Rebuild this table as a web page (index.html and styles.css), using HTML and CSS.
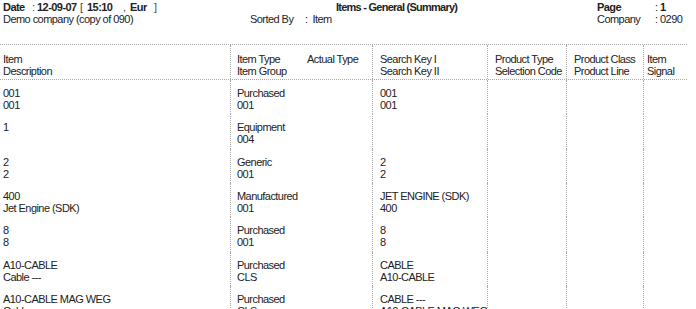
FILE: index.html
```html
<!DOCTYPE html>
<html>
<head>
<meta charset="utf-8">
<link rel="stylesheet" href="styles.css">
</head>
<body>
<div class="report">
  <header class="top">
    <div class="date">
      <b>Date</b><span>:</span><b>12-09-07</b><span>[</span><b>15:10</b><span>,</span><b>Eur</b><span>]</span>
    </div>
    <div class="title"><b>Items - General (Summary)</b></div>
    <div class="lbl"><b>Page</b></div>
    <div class="val">: <b>1</b></div>

    <div class="company">Demo company (copy of 090)</div>
    <div class="sorted">Sorted By</div>
    <div class="sortval"><span>:</span><span class="sv">Item</span></div>
    <div class="lbl">Company</div>
    <div class="val">: 0290</div>
  </header>

  <div class="table">
    <div class="row head">
      <div class="c c1">Item<br>Description</div>
      <div class="c c2"><div class="split"><span>Item Type<br>Item Group</span><span>Actual Type</span></div></div>
      <div class="c c3">Search Key I<br>Search Key II</div>
      <div class="c c4">Product Type<br>Selection Code</div>
      <div class="c c5">Product Class<br>Product Line</div>
      <div class="c c6">Item<br>Signal</div>
    </div>

    <div class="row">
      <div class="c c1">001<br>001</div>
      <div class="c c2">Purchased<br>001</div>
      <div class="c c3">001<br>001</div>
      <div class="c c4"></div><div class="c c5"></div><div class="c c6"></div>
    </div>
    <div class="row">
      <div class="c c1">1<br>&nbsp;</div>
      <div class="c c2">Equipment<br>004</div>
      <div class="c c3"></div>
      <div class="c c4"></div><div class="c c5"></div><div class="c c6"></div>
    </div>
    <div class="row">
      <div class="c c1">2<br>2</div>
      <div class="c c2">Generic<br>001</div>
      <div class="c c3">2<br>2</div>
      <div class="c c4"></div><div class="c c5"></div><div class="c c6"></div>
    </div>
    <div class="row">
      <div class="c c1">400<br>Jet Engine (SDK)</div>
      <div class="c c2">Manufactured<br>001</div>
      <div class="c c3">JET ENGINE (SDK)<br>400</div>
      <div class="c c4"></div><div class="c c5"></div><div class="c c6"></div>
    </div>
    <div class="row">
      <div class="c c1">8<br>8</div>
      <div class="c c2">Purchased<br>001</div>
      <div class="c c3">8<br>8</div>
      <div class="c c4"></div><div class="c c5"></div><div class="c c6"></div>
    </div>
    <div class="row">
      <div class="c c1">A10-CABLE<br>Cable ---</div>
      <div class="c c2">Purchased<br>CLS</div>
      <div class="c c3">CABLE<br>A10-CABLE</div>
      <div class="c c4"></div><div class="c c5"></div><div class="c c6"></div>
    </div>
    <div class="row">
      <div class="c c1">A10-CABLE MAG WEG<br>Cable ---</div>
      <div class="c c2">Purchased<br>CLS</div>
      <div class="c c3">CABLE ---<br>A10-CABLE MAG WEG</div>
      <div class="c c4"></div><div class="c c5"></div><div class="c c6"></div>
    </div>
  </div>
</div>
</body>
</html>
```

FILE: styles.css
```css
html, body {
  margin: 0;
  padding: 0;
  background: #ffffff;
}
body {
  font-family: "Liberation Sans", Arial, sans-serif;
  font-size: 11px;
  line-height: 12px;
  letter-spacing: -0.55px;
  color: #222222;
}
b { font-weight: bold; }

.report {
  width: 696px;
  overflow: hidden;
}

.top {
  display: grid;
  grid-template-columns: 250px 55px 292px 58px auto;
  grid-auto-rows: 12px;
  padding-top: 1px;
  white-space: nowrap;
}
.date {
  grid-column: 1 / 3;
  padding-left: 3px;
  display: grid;
  grid-template-columns: 29px 5px 43px 7px 36px 7px 24px auto;
}
.date span { color: #444; }
.title { padding-left: 31px; }
.title b { letter-spacing: -0.75px; }
.company { padding-left: 3px; }
.sortval .sv { margin-left: 5px; }

.table {
  margin-top: 19px;
  width: 687px;
}
.row {
  display: grid;
  grid-template-columns: 230px 142px 115px 79px 77px 44px;
}
.head {
  border-top: 1px dotted #a8a8a8;
  border-bottom: 1px dotted #a8a8a8;
}
.c {
  white-space: nowrap;
  overflow: hidden;
  padding-top: 7px;
  padding-bottom: 3.33px;
  min-height: 24px;
}
.head .c {
  padding-top: 8px;
  padding-bottom: 2px;
}
.c + .c { border-left: 1px dotted #a8a8a8; }
.c1 { padding-left: 3px; }
.c2 { padding-left: 6px; }
.c3, .c4, .c5 { padding-left: 7px; }
.c6 { padding-left: 3px; }

.split {
  display: grid;
  grid-template-columns: 70px auto;
}
```
